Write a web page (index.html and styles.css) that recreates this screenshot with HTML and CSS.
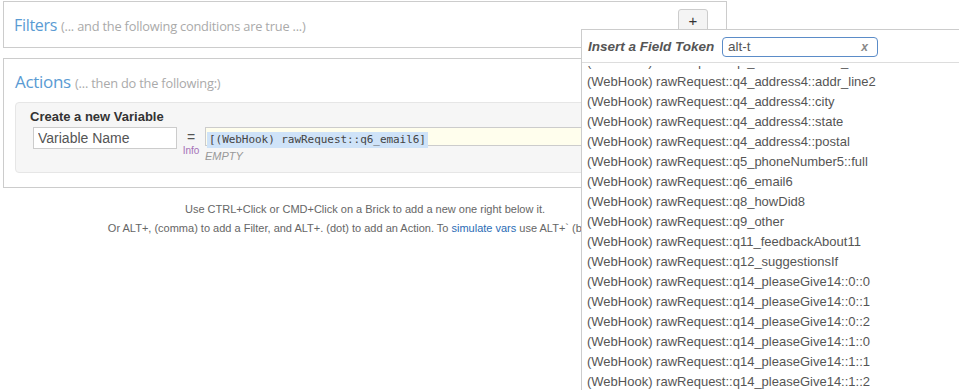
FILE: index.html
```html
<!DOCTYPE html>
<html>
<head>
<meta charset="utf-8">
<link rel="stylesheet" href="styles.css">
</head>
<body>
<div class="page">
  <section class="panel filters">
    <h2 class="panel-title">Filters <span class="sub">(... and the following conditions are true ...)</span></h2>
    <button class="add-btn">+</button>
  </section>
  <section class="panel actions">
    <h2 class="panel-title">Actions <span class="sub">(... then do the following:)</span></h2>
    <div class="brick">
      <div class="brick-title">Create a new Variable</div>
      <div class="brick-row">
        <input class="var-name" type="text" value="Variable Name">
        <div class="eq-col">
          <span class="eq">=</span>
          <span class="info">Info</span>
        </div>
        <div class="value-col">
          <div class="token-field"><span class="token-text">[(WebHook) rawRequest::q6_email6]</span></div>
          <div class="empty">EMPTY</div>
        </div>
      </div>
    </div>
  </section>
  <div class="hints">
    <p>Use CTRL+Click or CMD+Click on a Brick to add a new one right below it.</p>
    <p>Or ALT+, (comma) to add a Filter, and ALT+. (dot) to add an Action. To <a href="#">simulate vars</a> use ALT+` (backtick).</p>
  </div>
</div>

<div class="token-popup">
  <div class="popup-head">
    <span class="popup-title">Insert a Field Token</span>
    <div class="search">
      <span class="search-text">alt-t</span>
      <span class="search-x">x</span>
    </div>
  </div>
  <div class="token-list-wrap">
    <ul class="token-list">
      <li>(WebHook) rawRequest::q4_address4::addr_line1</li>
      <li>(WebHook) rawRequest::q4_address4::addr_line2</li>
      <li>(WebHook) rawRequest::q4_address4::city</li>
      <li>(WebHook) rawRequest::q4_address4::state</li>
      <li>(WebHook) rawRequest::q4_address4::postal</li>
      <li>(WebHook) rawRequest::q5_phoneNumber5::full</li>
      <li>(WebHook) rawRequest::q6_email6</li>
      <li>(WebHook) rawRequest::q8_howDid8</li>
      <li>(WebHook) rawRequest::q9_other</li>
      <li>(WebHook) rawRequest::q11_feedbackAbout11</li>
      <li>(WebHook) rawRequest::q12_suggestionsIf</li>
      <li>(WebHook) rawRequest::q14_pleaseGive14::0::0</li>
      <li>(WebHook) rawRequest::q14_pleaseGive14::0::1</li>
      <li>(WebHook) rawRequest::q14_pleaseGive14::0::2</li>
      <li>(WebHook) rawRequest::q14_pleaseGive14::1::0</li>
      <li>(WebHook) rawRequest::q14_pleaseGive14::1::1</li>
      <li>(WebHook) rawRequest::q14_pleaseGive14::1::2</li>
      <li>(WebHook) rawRequest::q14_pleaseGive14::2::0</li>
    </ul>
  </div>
</div>
</body>
</html>
```

FILE: styles.css
```css
* { box-sizing: border-box; }
html, body { margin: 0; padding: 0; background: #fff; }
body {
  font-family: "Liberation Sans", Arial, sans-serif;
  color: #555;
  width: 959px;
  height: 390px;
  overflow: hidden;
  position: relative;
}
.page {
  width: 724px;
  margin: 1px 0 0 3px;
}
.panel {
  border: 1px solid #ccc;
  background: #fff;
}
.filters {
  height: 47px;
  display: flex;
  justify-content: space-between;
  align-items: flex-start;
  padding: 0 18px 0 10px;
}
.filters .panel-title {
  align-self: center;
  margin-top: 0;
}
.panel-title {
  margin: 0;
  font-family: "Open Sans", sans-serif;
  font-weight: 400;
  font-size: 16px;
  color: #5a9bd3;
  letter-spacing: -0.3px;
}
.panel-title .sub {
  font-size: 12.8px;
  color: #aaa;
  letter-spacing: -0.2px;
}
.add-btn {
  margin-top: 7px;
  width: 30px;
  height: 24px;
  border: 1px solid #ccc;
  border-radius: 3px;
  background: #f4f4f4;
  color: #333;
  font-family: "Liberation Sans", Arial, sans-serif;
  font-size: 15px;
  line-height: 20px;
  padding: 0;
}
.actions {
  margin-top: 10px;
  padding: 12px 11px 14px 11px;
}
.actions .panel-title {
  font-size: 17px;
  line-height: 22px;
}
.brick {
  margin-top: 8px;
  background: #f6f6f6;
  border: 1px solid #e6e6e6;
  border-radius: 4px;
  padding: 6px 14px 7px 14px;
  height: 71px;
}
.brick-title {
  font-weight: bold;
  font-size: 13px;
  line-height: 16px;
  color: #333;
}
.brick-row {
  display: flex;
  align-items: flex-start;
  margin-top: 2px;
}
.var-name {
  margin-left: 3px;
  width: 144px;
  height: 22px;
  border: 1px solid #ccc;
  background: #fff;
  font-family: "Liberation Sans", Arial, sans-serif;
  font-size: 14px;
  color: #555;
  padding: 0 4px;
}
.eq-col {
  width: 28px;
  display: flex;
  flex-direction: column;
  align-items: center;
  padding-top: 2px;
}
.eq {
  font-size: 14px;
  line-height: 16px;
  color: #555;
}
.info {
  font-size: 10px;
  line-height: 12px;
  color: #a571b6;
}
.value-col {
  flex: 1;
}
.token-field {
  height: 19px;
  background: #fffeed;
  border-top: 1px solid #ccc;
  border-bottom: 1px solid #ccc;
  border-left: 1px solid #ccc;
  padding: 1px 0 0 1px;
}
.token-text {
  display: inline-block;
  background: #cfe3f8;
  font-family: "DejaVu Sans Mono", monospace;
  font-size: 11px;
  line-height: 16px;
  color: #444;
  padding: 0 2px 0 2px;
  letter-spacing: -0.05px;
}
.empty {
  font-style: italic;
  font-size: 11px;
  color: #999;
  margin-top: 4px;
  line-height: 13px;
}
.hints {
  text-align: center;
  font-size: 11px;
  color: #666;
  padding-top: 12px;
}
.hints p {
  margin: 0;
  line-height: 19px;
}
.hints a {
  color: #2b6cb5;
  text-decoration: none;
}

.token-popup {
  position: absolute;
  left: 581px;
  top: 29px;
  width: 400px;
  height: 380px;
  background: #fff;
  border: 1px solid #ccc;
}
.popup-head {
  display: flex;
  align-items: center;
  height: 33px;
  border-bottom: 1px solid #ddd;
  padding: 0 0 0 6px;
  width: 378px;
}
.popup-title {
  font-weight: bold;
  font-style: italic;
  font-size: 13.5px;
  color: #555;
  width: 134px;
  flex: none;
}
.search {
  width: 156px;
  height: 20px;
  border: 1px solid #5b8cc8;
  border-radius: 4px;
  display: flex;
  align-items: center;
  justify-content: space-between;
  padding: 0 9px 0 5px;
  margin-top: 1px;
}
.search-text {
  font-size: 13.5px;
  color: #555;
}
.search-x {
  font-weight: bold;
  font-style: italic;
  font-size: 12px;
  color: #888;
}
.token-list-wrap {
  margin-top: 3px;
  height: 340px;
  overflow: hidden;
}
.token-list {
  list-style: none;
  margin: -14px 0 0 0;
  padding: 0 0 0 5px;
}
.token-list li {
  font-size: 13px;
  line-height: 20px;
  color: #555;
  white-space: nowrap;
}
```
